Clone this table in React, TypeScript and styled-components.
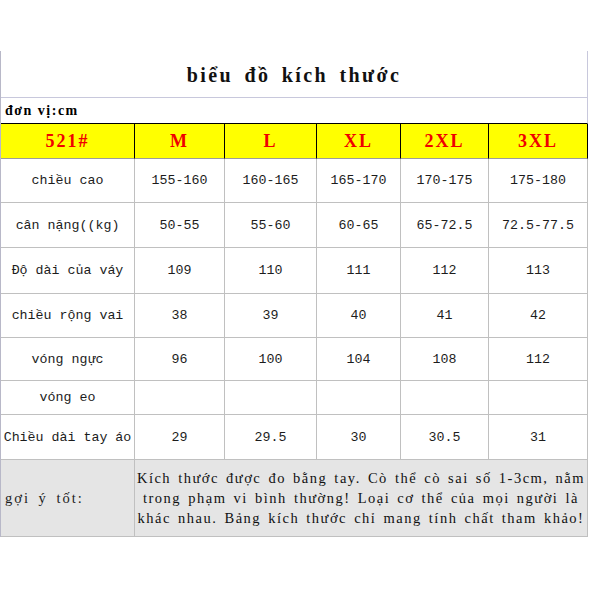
import styled, { createGlobalStyle, css } from 'styled-components';

const GlobalStyle = createGlobalStyle`
  html, body {
    margin: 0;
    padding: 0;
    background: #ffffff;
  }
`;

const lineGray = '#c0c0c0';
const lineLavender = '#c8c8dc';
const columns = '134px 90px 92px 84px 88px 99px';

const Sheet = styled.div`
  margin-top: 51px;
  width: 588px;
  border-left: 1px solid #b8b8c8;
  box-sizing: border-box;
`;

const Row = styled.div<{ $h: number; $tone?: 'plain' | 'head' | 'note' }>`
  display: grid;
  grid-template-columns: ${columns};
  height: ${(p) => p.$h}px;
  background: ${(p) => (p.$tone === 'head' ? '#ffff00' : p.$tone === 'note' ? '#e5e5e5' : '#ffffff')};
`;

const TitleCell = styled.div`
  grid-column: span 6;
  display: flex;
  align-items: center;
  justify-content: center;
  box-sizing: border-box;
  border-right: 1px solid ${lineLavender};
  border-bottom: 1px solid ${lineLavender};
  font-family: 'Liberation Serif', serif;
  font-weight: bold;
  font-size: 20px;
  letter-spacing: 2.4px;
  word-spacing: 4px;
  color: #111;
  padding-top: 3px;
`;

const UnitCell = styled.div`
  grid-column: span 6;
  display: flex;
  align-items: center;
  box-sizing: border-box;
  padding-left: 4px;
  border-right: 1px solid ${lineLavender};
  border-bottom: 1px solid #000;
  font-family: 'Liberation Serif', serif;
  font-weight: bold;
  font-size: 14px;
  letter-spacing: 1.5px;
  color: #000;
`;

const cellBase = css`
  display: flex;
  align-items: center;
  justify-content: center;
  box-sizing: border-box;
  white-space: nowrap;
`;

const HeadCell = styled.div`
  ${cellBase};
  border-right: 1px solid #000;
  border-bottom: 1px solid #9c9c9c;
  font-family: 'Liberation Serif', serif;
  font-weight: bold;
  font-size: 18px;
  letter-spacing: 2px;
  color: #f00000;
  padding-top: 1px;
`;

const Cell = styled.div<{ $left?: boolean }>`
  ${cellBase};
  justify-content: ${(p) => (p.$left ? 'flex-start' : 'center')};
  padding-left: ${(p) => (p.$left ? '4px' : '0')};
  border-right: 1px solid ${lineGray};
  border-bottom: 1px solid ${lineGray};
  font-family: 'Liberation Mono', monospace;
  font-size: 13.3px;
  color: #1c1c1c;
`;

const NoteLabel = styled(Cell)`
  font-family: 'Liberation Serif', serif;
  font-size: 14.5px;
  letter-spacing: 2px;
  word-spacing: 3px;
`;

const NoteText = styled.div`
  grid-column: span 5;
  display: flex;
  align-items: center;
  justify-content: center;
  box-sizing: border-box;
  border-right: 1px solid ${lineGray};
  border-bottom: 1px solid ${lineGray};
  font-family: 'Liberation Serif', serif;
  font-size: 14.5px;
  line-height: 20px;
  letter-spacing: 1.5px;
  word-spacing: 2px;
  text-align: center;
  white-space: nowrap;
  color: #111;
`;

const sizes = ['M', 'L', 'XL', '2XL', '3XL'];

const rows: { label: string; values: string[]; h: number }[] = [
  { label: 'chiều cao', values: ['155-160', '160-165', '165-170', '170-175', '175-180'], h: 44 },
  { label: 'cân nặng((kg)', values: ['50-55', '55-60', '60-65', '65-72.5', '72.5-77.5'], h: 45 },
  { label: 'Độ dài của váy', values: ['109', '110', '111', '112', '113'], h: 46 },
  { label: 'chiều rộng vai', values: ['38', '39', '40', '41', '42'], h: 44 },
  { label: 'vóng ngực', values: ['96', '100', '104', '108', '112'], h: 43 },
  { label: 'vóng eo', values: ['', '', '', '', ''], h: 34 },
  { label: 'Chiều dài tay áo', values: ['29', '29.5', '30', '30.5', '31'], h: 45 },
];

const App = () => {
  return (
    <>
      <GlobalStyle />
      <Sheet>
        <Row $h={47}>
          <TitleCell>biểu đồ kích thước</TitleCell>
        </Row>
        <Row $h={26}>
          <UnitCell>đơn vị:cm</UnitCell>
        </Row>
        <Row $h={35} $tone="head">
          <HeadCell>521#</HeadCell>
          {sizes.map((s) => (
            <HeadCell key={s}>{s}</HeadCell>
          ))}
        </Row>
        {rows.map((r) => (
          <Row key={r.label} $h={r.h}>
            <Cell>{r.label}</Cell>
            {r.values.map((v, i) => (
              <Cell key={i}>{v}</Cell>
            ))}
          </Row>
        ))}
        <Row $h={77} $tone="note">
          <NoteLabel $left>gợi ý tốt:</NoteLabel>
          <NoteText>
            Kích thước được đo bằng tay. Cò thể cò sai số 1-3cm, nằm
            <br />
            trong phạm vi bình thường! Loại cơ thể của mọi người là
            <br />
            khác nhau. Bảng kích thước chỉ mang tính chất tham khảo!
          </NoteText>
        </Row>
      </Sheet>
    </>
  );
};

export default App;
